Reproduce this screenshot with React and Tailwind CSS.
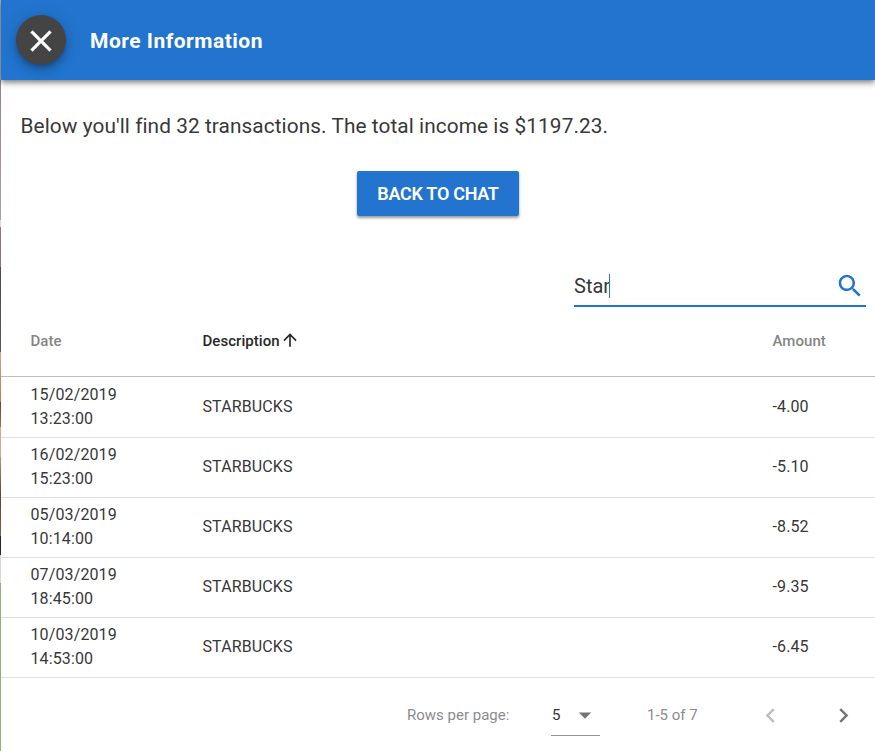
const transactions = [
  { date: '15/02/2019', time: '13:23:00', description: 'STARBUCKS', amount: '-4.00' },
  { date: '16/02/2019', time: '15:23:00', description: 'STARBUCKS', amount: '-5.10' },
  { date: '05/03/2019', time: '10:14:00', description: 'STARBUCKS', amount: '-8.52' },
  { date: '07/03/2019', time: '18:45:00', description: 'STARBUCKS', amount: '-9.35' },
  { date: '10/03/2019', time: '14:53:00', description: 'STARBUCKS', amount: '-6.45' },
];

function Icon({ d, className }) {
  return (
    <svg viewBox="0 0 24 24" fill="currentColor" className={className} aria-hidden="true">
      <path d={d} />
    </svg>
  );
}

const icons = {
  close: 'M19 6.41 17.59 5 12 10.59 6.41 5 5 6.41 10.59 12 5 17.59 6.41 19 12 13.41 17.59 19 19 17.59 13.41 12z',
  search:
    'M15.5 14h-.79l-.28-.27C15.41 12.59 16 11.11 16 9.5 16 5.91 13.09 3 9.5 3S3 5.91 3 9.5 5.91 16 9.5 16c1.61 0 3.09-.59 4.23-1.57l.27.28v.79l5 4.99L20.49 19l-4.99-5zm-6 0C7.01 14 5 11.99 5 9.5S7.01 5 9.5 5 14 7.01 14 9.5 11.99 14 9.5 14z',
  arrowUp: 'M4 12l1.41 1.41L11 7.83V20h2V7.83l5.58 5.59L20 12l-8-8-8 8z',
  dropDown: 'M7 10l5 5 5-5z',
  left: 'M15.41 7.41 14 6l-6 6 6 6 1.41-1.41L10.83 12z',
  right: 'M10 6 8.59 7.41 13.17 12l-4.58 4.59L10 18l6-6z',
};

// Sliver of the page that shows behind the panel's left edge.
function Backdrop() {
  return (
    <div className="flex w-px shrink-0 flex-col">
      <div className="h-20 bg-[#a9b1bd]" />
      <div className="h-[140px] bg-linear-to-b from-[#8f8488] to-[#b59ca4]" />
      <div className="h-[7px] bg-[#ded9db]" />
      <div className="h-[40px] bg-linear-to-b from-[#93767c] to-[#8e7078]" />
      <div className="h-[85px] bg-linear-to-b from-[#4d484b] to-[#59595b]" />
      <div className="h-[50px] bg-linear-to-b from-[#d3a193] to-[#bd7660]" />
      <div className="h-[25px] bg-linear-to-b from-[#684338] to-[#9a7151]" />
      <div className="h-[30px] bg-[#d2a79a]" />
      <div className="h-[79px] bg-linear-to-b from-[#c78c77] via-[#654035] to-[#8c5c4c]" />
      <div className="h-[19px] bg-[#242527]" />
      <div className="h-[28px] bg-[#d8d6d7]" />
      <div className="flex-1 bg-[#8fb46b]" />
    </div>
  );
}

const columns = 'grid grid-cols-[172px_570px_1fr] items-center pl-[29.5px]';

export default function App() {
  return (
    <div className="flex h-[751px] w-[875px] overflow-hidden bg-white font-['Roboto',sans-serif] text-[#383838]">
      <Backdrop />
      <main className="flex min-w-0 flex-1 flex-col">
        <header className="flex h-20 shrink-0 items-center bg-[#2274ce] pl-[15px] shadow-[0_2px_4px_-1px_rgba(0,0,0,0.3),0_4px_5px_0_rgba(0,0,0,0.2),0_1px_10px_0_rgba(0,0,0,0.18)]">
          <button className="flex size-[50px] items-center justify-center rounded-full bg-[#444] pr-px text-white shadow-[0_3px_5px_-1px_rgba(0,0,0,0.2),0_6px_10px_0_rgba(0,0,0,0.14),0_1px_18px_0_rgba(0,0,0,0.12)]">
            <Icon d={icons.close} className="mt-px size-9 shrink-0 stroke-current stroke-[0.25]" />
          </button>
          <h1 className="mt-0.5 ml-6 text-[21px] leading-6 font-bold tracking-[0.5px] text-white">More Information</h1>
        </header>

        <p className="mt-[34px] ml-[19.5px] text-[20.8px] leading-6 tracking-[0.08px]">
          Below you'll find 32 transactions. The total income is $1197.23.
        </p>

        <button className="mt-[33px] h-[45px] w-[162px] shrink-0 self-center rounded-[2px] bg-[#2274ce] text-[18px] font-semibold tracking-[-0.3px] text-white shadow-[0_2px_3px_rgba(0,0,0,0.4)]">
          BACK TO CHAT
        </button>

        <div className="mt-[50px] mr-[9px] flex h-[41px] w-[292px] shrink-0 items-center self-end border-b-2 border-[#2274ce]">
          <span className="text-[20px] leading-6">Star</span>
          <span className="-ml-px h-6 w-px bg-[#2274ce]" />
          <Icon d={icons.search} className="mr-px ml-auto size-[30px] text-[#2274ce]" />
        </div>

        <div className={`${columns} h-[70px] shrink-0 border-b border-[#bdbdbd] text-[15px] font-medium tracking-[0.05px] text-[#858585]`}>
          <span>Date</span>
          <span className="flex items-center text-[#292929]">
            Description
            <Icon d={icons.arrowUp} className="mb-[3px] size-5" />
          </span>
          <span>Amount</span>
        </div>

        <div className="shrink-0 pt-px">
          {transactions.map((row) => (
            <div key={row.date} className={`${columns} h-[60px] border-b border-[#e0e0e0] pb-0.5 text-[16px] leading-6 tracking-[0.12px]`}>
              <span>
                {row.date}
                <br />
                {row.time}
              </span>
              <span>{row.description}</span>
              <span>{row.amount}</span>
            </div>
          ))}
        </div>

        <footer className="flex flex-1 items-center pt-px pl-[406px] text-[15px] text-[#8c8c8c]">
          <span className="w-[144px]">Rows per page:</span>
          <span className="flex h-[42px] w-[49px] items-center border-b border-[#949494] text-[#333]">
            <span className="pt-px pl-px">5</span>
            <Icon d={icons.dropDown} className="ml-auto size-[30px] text-[#757575]" />
          </span>
          <span className="ml-[47px] w-[109px]">1-5 of 7</span>
          <Icon d={icons.left} className="size-[29px] text-[#bdbdbd]" />
          <Icon d={icons.right} className="ml-11 size-[29px] text-[#757575]" />
        </footer>
      </main>
    </div>
  );
}
